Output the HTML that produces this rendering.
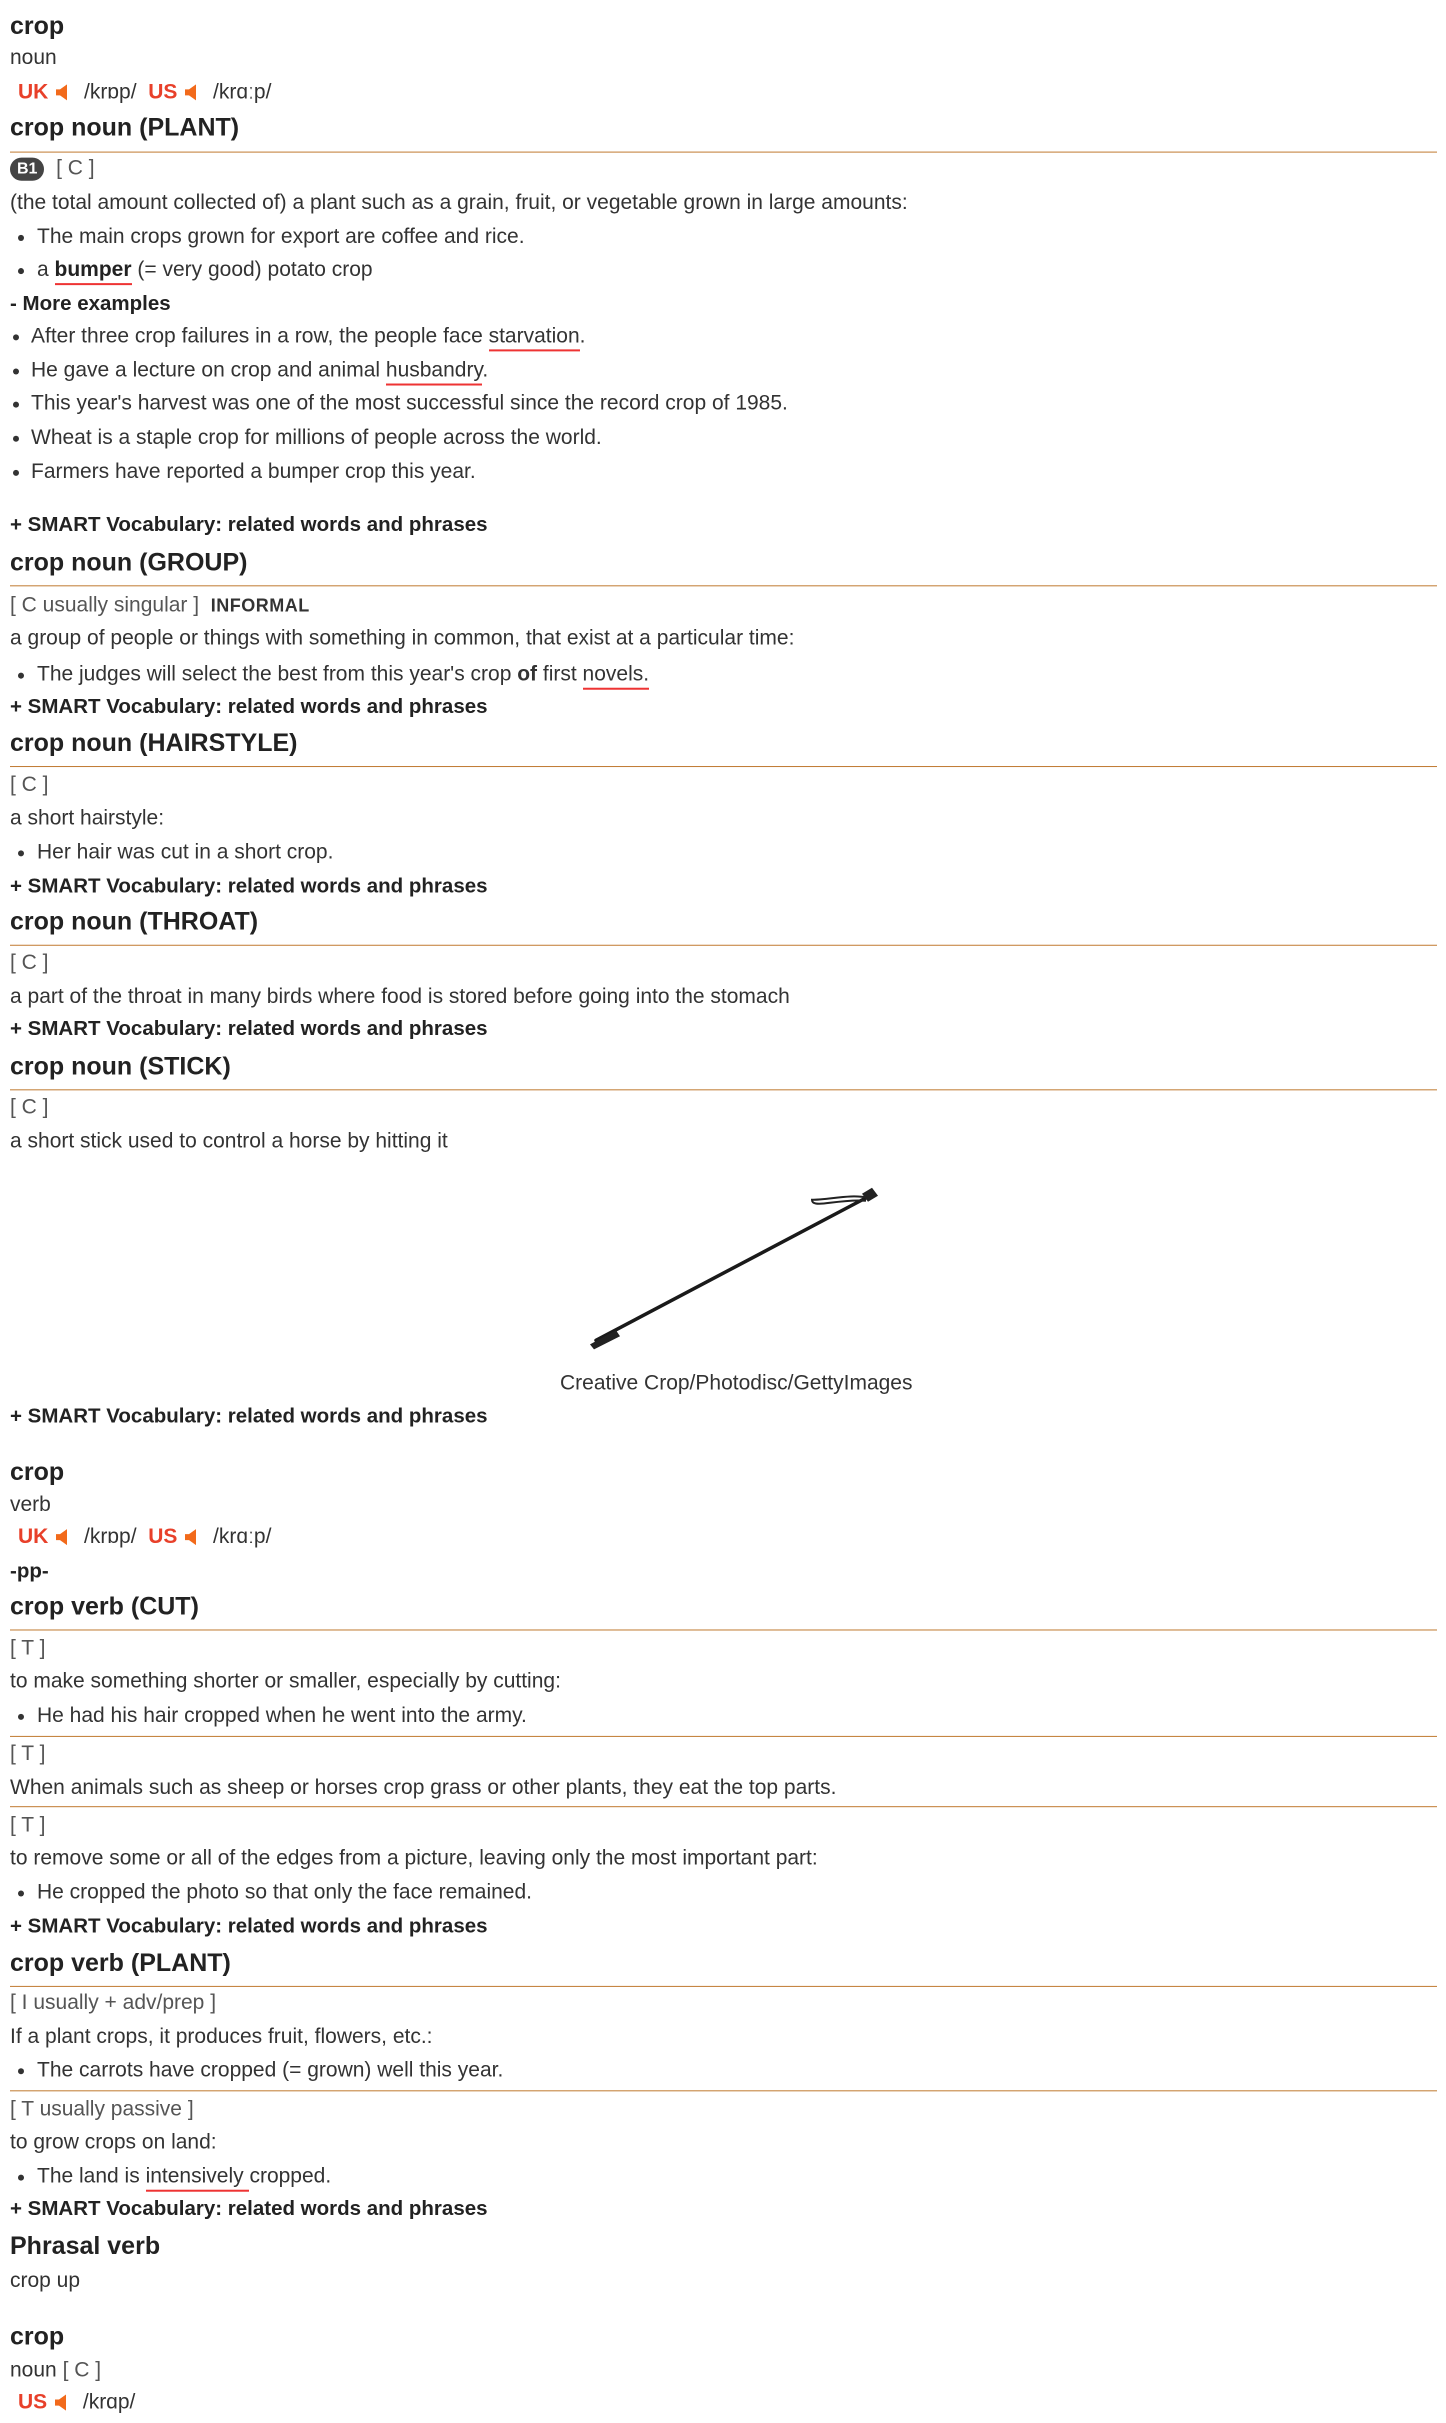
<!DOCTYPE html>
<html><head><meta charset="utf-8"><style>
body{margin:0;width:1446px;height:2410px;position:relative;background:#fff;font-family:"Liberation Sans",Arial,sans-serif;color:#333;font-size:21px;overflow:hidden}
#w{position:absolute;left:0;top:0;width:1446px;height:2410px;transform:translateY(3px) scaleY(1.004);transform-origin:0 0}
.l{position:absolute;left:10px;line-height:34px;white-space:nowrap}
.h{font-size:25px;font-weight:bold;color:#222}
.b{font-weight:bold;color:#222;font-size:20.5px}
.g{color:#555}
.hr{position:absolute;left:10px;width:1427px;height:1px;background:#c07a30}
.li{position:absolute;left:37px;line-height:34px;white-space:nowrap}
.li:before{content:"";position:absolute;left:-19px;top:15px;width:6px;height:6px;border-radius:50%;background:#333}
.mi{left:31px}
.mi:before{left:-18px}
.u{border-bottom:2px solid #e33;padding-bottom:2px}
.uk{color:#e8402a;font-weight:bold}
.sp{display:inline-block;width:16px;height:18px;vertical-align:-3px;margin:0 2px 0 6px}
.b1{display:inline-block;background:#444;color:#fff;font-weight:bold;font-size:16px;border-radius:12px;padding:1px 7px;line-height:21px;vertical-align:1px}
.inf{font-size:18px;font-weight:bold;color:#333;letter-spacing:.5px}
</style></head><body>
<svg width="0" height="0" style="position:absolute"><symbol id="s" viewBox="0 0 16 18"><path d="M2 6 H6 L13 1 V17 L6 12 H2 Z" fill="#f26a1b"/></symbol></svg>
<div id="w">
<div class="l h" style="top:6px">crop</div>
<div class="l" style="top:38px">noun</div>
<div class="l" style="top:72px;left:18px"><span class="uk">UK</span><svg class="sp"><use href="#s"/></svg>&nbsp; /krɒp/ &nbsp;<span class="uk">US</span><svg class="sp"><use href="#s"/></svg>&nbsp; /krɑːp/</div>
<div class="l h" style="top:107px">crop noun (PLANT)</div>
<div class="hr" style="top:148px"></div>
<div class="l g" style="top:148px"><span class="b1">B1</span> &nbsp;[ C ]</div>
<div class="l" style="top:182px">(the total amount collected of) a plant such as a grain, fruit, or vegetable grown in large amounts:</div>
<div class="li" style="top:216px">The main crops grown for export are coffee and rice.</div>
<div class="li" style="top:249px">a <b class="u" style="color:#222">bumper</b> (= very good) potato crop</div>
<div class="l b" style="top:283px">- More examples</div>
<div class="li mi" style="top:315px">After three crop failures in a row, the people face <span class="u">starvation</span>.</div>
<div class="li mi" style="top:349px">He gave a lecture on crop and animal <span class="u">husbandry</span>.</div>
<div class="li mi" style="top:382px">This year's harvest was one of the most successful since the record crop of 1985.</div>
<div class="li mi" style="top:416px">Wheat is a staple crop for millions of people across the world.</div>
<div class="li mi" style="top:450px">Farmers have reported a bumper crop this year.</div>
<div class="l b" style="top:503px">+ SMART Vocabulary: related words and phrases</div>
<div class="l h" style="top:540px">crop noun (GROUP)</div>
<div class="hr" style="top:580px"></div>
<div class="l g" style="top:583px">[ C usually singular ] &nbsp;<span class="inf">INFORMAL</span></div>
<div class="l" style="top:616px">a group of people or things with something in common, that exist at a particular time:</div>
<div class="li" style="top:652px">The judges will select the best from this year's crop <b>of</b> first <span class="u">novels.</span></div>
<div class="l b" style="top:684px">+ SMART Vocabulary: related words and phrases</div>
<div class="l h" style="top:720px">crop noun (HAIRSTYLE)</div>
<div class="hr" style="top:760px"></div>
<div class="l g" style="top:762px">[ C ]</div>
<div class="l" style="top:795px">a short hairstyle:</div>
<div class="li" style="top:829px">Her hair was cut in a short crop.</div>
<div class="l b" style="top:863px">+ SMART Vocabulary: related words and phrases</div>
<div class="l h" style="top:898px">crop noun (THROAT)</div>
<div class="hr" style="top:938px"></div>
<div class="l g" style="top:939px">[ C ]</div>
<div class="l" style="top:973px">a part of the throat in many birds where food is stored before going into the stomach</div>
<div class="l b" style="top:1005px">+ SMART Vocabulary: related words and phrases</div>
<div class="l h" style="top:1042px">crop noun (STICK)</div>
<div class="hr" style="top:1082px"></div>
<div class="l g" style="top:1083px">[ C ]</div>
<div class="l" style="top:1117px">a short stick used to control a horse by hitting it</div>
<svg style="position:absolute;left:560px;top:1170px" width="340" height="180" viewBox="0 0 340 180">
<line x1="36" y1="162" x2="310" y2="18" stroke="#1a1a1a" stroke-width="3.5" stroke-linecap="round"/>
<path d="M30 166 L56 152 L60 158 L34 171 Z" fill="#222"/>
<path d="M302 16 L312 10 L318 18 L308 24 Z" fill="#222"/>
<path d="M308 20 C290 16 270 22 252 22 C252 26 256 27 270 25 C285 23 296 22 306 23" fill="none" stroke="#222" stroke-width="2"/>
</svg>
<div class="l" style="top:1358px;left:560px">Creative Crop/Photodisc/GettyImages</div>
<div class="l b" style="top:1391px">+ SMART Vocabulary: related words and phrases</div>
<div class="l h" style="top:1446px">crop</div>
<div class="l" style="top:1479px">verb</div>
<div class="l" style="top:1511px;left:18px"><span class="uk">UK</span><svg class="sp"><use href="#s"/></svg>&nbsp; /krɒp/ &nbsp;<span class="uk">US</span><svg class="sp"><use href="#s"/></svg>&nbsp; /krɑːp/</div>
<div class="l b" style="top:1545px">-pp-</div>
<div class="l h" style="top:1580px">crop verb (CUT)</div>
<div class="hr" style="top:1620px"></div>
<div class="l g" style="top:1622px">[ T ]</div>
<div class="l" style="top:1655px">to make something shorter or smaller, especially by cutting:</div>
<div class="li" style="top:1689px">He had his hair cropped when he went into the army.</div>
<div class="hr" style="top:1726px"></div>
<div class="l g" style="top:1727px">[ T ]</div>
<div class="l" style="top:1761px">When animals such as sheep or horses crop grass or other plants, they eat the top parts.</div>
<div class="hr" style="top:1796px"></div>
<div class="l g" style="top:1798px">[ T ]</div>
<div class="l" style="top:1831px">to remove some or all of the edges from a picture, leaving only the most important part:</div>
<div class="li" style="top:1865px">He cropped the photo so that only the face remained.</div>
<div class="l b" style="top:1899px">+ SMART Vocabulary: related words and phrases</div>
<div class="l h" style="top:1935px">crop verb (PLANT)</div>
<div class="hr" style="top:1975px"></div>
<div class="l g" style="top:1975px">[ I usually + adv/prep ]</div>
<div class="l" style="top:2009px">If a plant crops, it produces fruit, flowers, etc.:</div>
<div class="li" style="top:2042px">The carrots have cropped (= grown) well this year.</div>
<div class="hr" style="top:2079px"></div>
<div class="l g" style="top:2081px">[ T usually passive ]</div>
<div class="l" style="top:2114px">to grow crops on land:</div>
<div class="li" style="top:2148px">The land is <span class="u">intensively </span>cropped.</div>
<div class="l b" style="top:2180px">+ SMART Vocabulary: related words and phrases</div>
<div class="l h" style="top:2217px">Phrasal verb</div>
<div class="l" style="top:2252px">crop up</div>
<div class="l h" style="top:2307px">crop</div>
<div class="l" style="top:2341px">noun <span class="g">[ C ]</span></div>
<div class="l" style="top:2373px;left:18px"><span class="uk">US</span><svg class="sp"><use href="#s"/></svg>&nbsp; /krɑp/</div>
</div>
</body></html>
